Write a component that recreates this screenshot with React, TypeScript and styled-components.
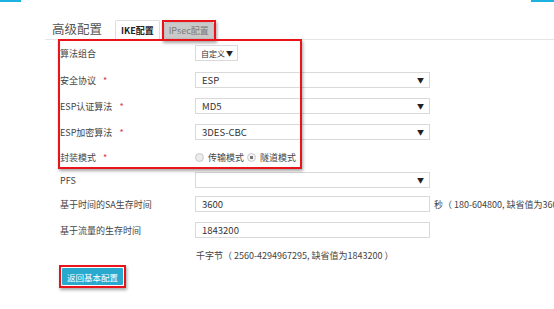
import React from 'react';
import styled, { createGlobalStyle } from 'styled-components';

const GlobalStyle = createGlobalStyle`
    html, body {
        margin: 0;
        padding: 0;
        background: #ffffff;
        overflow: hidden;
    }
    body {
        font-family: "Noto Sans CJK SC", "Noto Sans", "Liberation Sans", sans-serif;
        color: #444444;
    }
`;

const Page = styled.div`
    width: 554px;
    height: 309px;
    position: relative;
    overflow: hidden;
`;

const TopBar = styled.div`
    display: flex;
    justify-content: space-between;
    height: 2px;
`;

const Strip = styled.div<{ width: number }>`
    width: ${(props) => props.width}px;
    height: 2px;
    background-color: #1cb2df;
`;

const Header = styled.div`
    display: flex;
    align-items: flex-end;
    margin: 16px 0 0 45px;
    height: 21px;
    border-bottom: 1px solid #e6e6e6;
`;

const Title = styled.div`
    font-size: 12.5px;
    line-height: 21px;
    color: #555555;
    margin: 0 13px 0 7px;
    align-self: center;
`;

const Tab = styled.div<{ active?: boolean }>`
    position: relative;
    height: ${(props) => (props.active ? '20px' : '17px')};
    padding: 0 ${(props) => (props.active ? '5px' : '4px')};
    margin-right: 4px;
    margin-bottom: ${(props) => (props.active ? '-1px' : '0')};
    display: flex;
    align-items: center;
    font-size: 9px;
    font-weight: ${(props) => (props.active ? 700 : 400)};
    color: ${(props) => (props.active ? '#222222' : '#7a7a7a')};
    background-color: ${(props) => (props.active ? '#ffffff' : '#c9c9c9')};
    border: 1px solid ${(props) => (props.active ? '#dddddd' : '#c0c0c0')};
    border-bottom-color: ${(props) => (props.active ? '#ffffff' : '#c0c0c0')};
    border-radius: 2px 2px 0 0;
    box-sizing: border-box;
`;

const Mark = styled.div<{ inset: number }>`
    position: absolute;
    top: -${(props) => props.inset}px;
    left: -${(props) => props.inset}px;
    right: -${(props) => props.inset}px;
    bottom: -${(props) => props.inset}px;
    border: 2px solid #e8141a;
    box-shadow: 1px 2px 3px rgba(0, 0, 0, 0.35);
    pointer-events: none;
`;

const Form = styled.div`
    display: flex;
    flex-direction: column;
    margin-top: -1px;
    padding-left: 60px;
`;

const Group = styled.div`
    position: relative;
    display: flex;
    flex-direction: column;
`;

const GroupMark = styled.div`
    position: absolute;
    top: 0;
    left: -2px;
    width: 244px;
    height: 130px;
    border: 2px solid #e8141a;
    box-sizing: border-box;
    box-shadow: 1px 2px 3px rgba(0, 0, 0, 0.35);
    pointer-events: none;
`;

const Row = styled.div<{ height: number }>`
    display: flex;
    align-items: center;
    height: ${(props) => props.height}px;
    font-size: 9px;
    white-space: nowrap;
`;

const Label = styled.div`
    width: 135px;
    color: #444444;
    flex-shrink: 0;
`;

const Star = styled.span`
    color: #e53333;
    margin-left: 7px;
    font-size: 9px;
`;

const Field = styled.div<{ width: number; small?: boolean }>`
    width: ${(props) => props.width}px;
    height: 16px;
    border: 1px solid #d9d9d9;
    box-sizing: border-box;
    display: flex;
    align-items: center;
    justify-content: space-between;
    padding: ${(props) => (props.small ? '0 4px 0 5px' : '0 5px 0 6px')};
    color: #333333;
    font-size: ${(props) => (props.small ? '8px' : '9.5px')};
    background: #ffffff;
    flex-shrink: 0;
`;

const Arrow = styled.span`
    font-size: 7px;
    color: #222222;
`;

const Hint = styled.span`
    margin-left: 4px;
    color: #444444;
    font-size: 9px;
`;

const Radio = styled.span<{ checked?: boolean }>`
    width: 7px;
    height: 7px;
    border-radius: 50%;
    border: 1px solid #c8c8c8;
    background: ${(props) =>
        props.checked ? 'radial-gradient(circle, #777 0 1.6px, #f4f4f4 2px)' : '#ececec'};
    margin: 0 4px 0 0;
    flex-shrink: 0;
`;

const RadioText = styled.span`
    margin-right: 3px;
    color: #444444;
`;

const Note = styled.div`
    height: 24px;
    display: flex;
    align-items: center;
    padding-left: 136px;
    font-size: 9px;
    color: #444444;
    white-space: nowrap;
`;

const ButtonRow = styled.div`
    margin-top: 1px;
    display: flex;
`;

const ButtonWrap = styled.div`
    position: relative;
    margin-left: 2px;
`;

const Button = styled.div`
    width: 61px;
    height: 17px;
    background-color: #2aa9cf;
    color: #ffffff;
    font-size: 8.5px;
    display: flex;
    align-items: center;
    justify-content: center;
    border-radius: 1px;
`;

const selects = [
    { label: '安全协议', value: 'ESP' },
    { label: 'ESP认证算法', value: 'MD5' },
    { label: 'ESP加密算法', value: '3DES-CBC' },
];

const App: React.FC = () => {
    return (
        <Page>
            <GlobalStyle />
            <TopBar>
                <Strip width={21} />
                <Strip width={23} />
            </TopBar>
            <Header>
                <Title>高级配置</Title>
                <Tab active>IKE配置</Tab>
                <Tab>
                    IPsec配置
                    <Mark inset={3} />
                </Tab>
            </Header>
            <Form>
                <Group>
                    <Row height={28}>
                        <Label>算法组合</Label>
                        <Field width={43} small>
                            自定义<Arrow>▼</Arrow>
                        </Field>
                    </Row>
                    {selects.map((item) => (
                        <Row height={26} key={item.label}>
                            <Label>
                                {item.label}
                                <Star>*</Star>
                            </Label>
                            <Field width={235}>
                                {item.value}
                                <Arrow>▼</Arrow>
                            </Field>
                        </Row>
                    ))}
                    <Row height={24}>
                        <Label>
                            封装模式
                            <Star>*</Star>
                        </Label>
                        <Radio />
                        <RadioText>传输模式</RadioText>
                        <Radio checked />
                        <RadioText>隧道模式</RadioText>
                    </Row>
                    <GroupMark />
                </Group>
                <Row height={22}>
                    <Label>PFS</Label>
                    <Field width={235}>
                        <span />
                        <Arrow>▼</Arrow>
                    </Field>
                </Row>
                <Row height={26}>
                    <Label>基于时间的SA生存时间</Label>
                    <Field width={235}>3600</Field>
                    <Hint>秒（ 180-604800, 缺省值为3600）</Hint>
                </Row>
                <Row height={26}>
                    <Label>基于流量的生存时间</Label>
                    <Field width={235}>1843200</Field>
                </Row>
                <Note>千字节（ 2560-4294967295, 缺省值为1843200 ）</Note>
                <ButtonRow>
                    <ButtonWrap>
                        <Button>返回基本配置</Button>
                        <Mark inset={3} />
                    </ButtonWrap>
                </ButtonRow>
            </Form>
        </Page>
    );
};

export default App;
